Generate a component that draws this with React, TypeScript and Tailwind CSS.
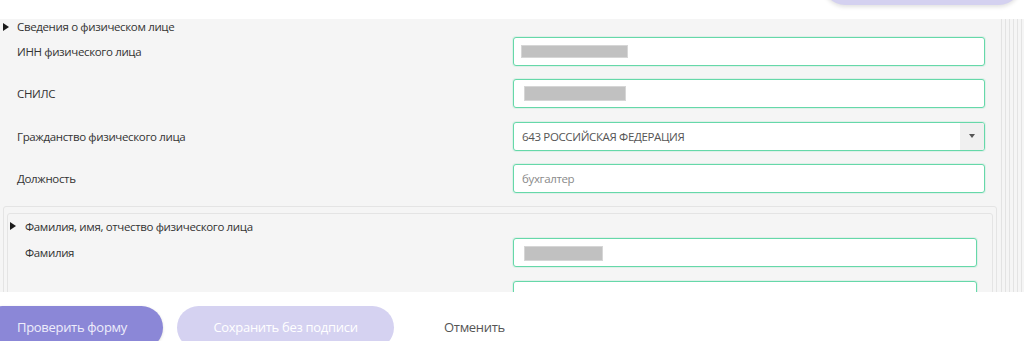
const font = { fontFamily: '"Open Sans", "Liberation Sans", sans-serif' }

function Caret() {
  return (
    <svg width="6" height="8" viewBox="0 0 6 8" className="shrink-0">
      <polygon points="0,0 6,4 0,8" fill="#1a1a1a" />
    </svg>
  )
}

function Masked({ w, h = 13 }: { w: number; h?: number }) {
  return (
    <div
      className="bg-[#c1c1c1] border border-[#d6d6d6]"
      style={{ width: w, height: h }}
    />
  )
}

type Row = {
  label: string
  content: React.ReactNode
  select?: boolean
}

function Field({ row, labelW }: { row: Row; labelW: number }) {
  return (
    <div className="flex items-center">
      <div
        className="text-[11.5px] tracking-[-0.35px] text-[#333] leading-none"
        style={{ width: labelW }}
      >
        {row.label}
      </div>
      <div className="flex-1 h-[29px] bg-white border border-[#66d8a9] rounded-[3px] shadow-[0_0_0_1px_rgba(102,216,169,0.15)] flex items-center overflow-hidden">
        <div className="flex-1 pl-[7px] flex items-center">{row.content}</div>
        {row.select && (
          <div className="w-[24px] h-full bg-[#f0f0f0] flex items-center justify-center">
            <svg width="6" height="4" viewBox="0 0 6 4">
              <polygon points="0,0 6,0 3,4" fill="#555" />
            </svg>
          </div>
        )}
      </div>
    </div>
  )
}

const personRows: Row[] = [
  { label: 'ИНН физического лица', content: <Masked w={107} /> },
  { label: 'СНИЛС', content: <div className="pl-[3px]"><Masked w={102} h={15} /></div> },
  {
    label: 'Гражданство физического лица',
    content: <span className="text-[11.5px] tracking-[-0.35px] text-[#555] pl-[1px]">643 РОССИЙСКАЯ ФЕДЕРАЦИЯ</span>,
    select: true,
  },
  {
    label: 'Должность',
    content: <span className="text-[11.5px] tracking-[-0.35px] text-[#8a8a8a] pl-[1px]">бухгалтер</span>,
  },
]

const nameRows: Row[] = [
  { label: 'Фамилия', content: <div className="pl-[3px] pt-[2px]"><Masked w={79} h={15} /></div> },
  { label: 'Имя', content: <span className="text-[12px] text-[#555]">&nbsp;</span> },
]

export default function App() {
  return (
    <div className="w-[1024px] h-[341px] bg-white overflow-hidden flex flex-col" style={font}>
      {/* top strip with the tail of a button scrolled out of view */}
      <div className="h-[19px] shrink-0 flex justify-end pr-[3px] overflow-hidden">
        <div className="w-[198px] h-[44px] -mt-[39px] rounded-full bg-[#d4d1f0] shadow-[0_2px_4px_rgba(0,0,0,0.12)]" />
      </div>

      {/* scrolling form area */}
      <div className="h-[273px] shrink-0 bg-[#f5f5f5] flex overflow-hidden">
        <div className="w-[1001px] shrink-0">
          <div className="h-[19px] flex items-center gap-[7px] pl-[3px] -mt-[2px]">
            <Caret />
            <span className="text-[11.5px] tracking-[-0.35px] text-[#333] pl-[1px]">Сведения о физическом лице</span>
          </div>
          <div className="flex flex-col gap-[13.4px] pl-[17px] pr-[16px] mt-[1px]">
            {personRows.map((r) => (
              <Field key={r.label} row={r} labelW={496} />
            ))}
          </div>

          <div className="mt-[13px] ml-[3px] mr-[4px] border border-[#e4e4e4] rounded-[3px] p-[6px] pl-[3px] pr-[3px]">
            <div className="border border-[#e4e4e4] rounded-[3px]">
              <div className="h-[24px] flex items-center gap-[8px] pl-[2px]">
                <Caret />
                <span className="text-[11.5px] tracking-[-0.35px] text-[#333] pl-[1px]">Фамилия, имя, отчество физического лица</span>
              </div>
              <div className="flex flex-col gap-[14px] pl-[17px] pr-[15px]">
                {nameRows.map((r) => (
                  <Field key={r.label} row={r} labelW={488} />
                ))}
              </div>
            </div>
          </div>
        </div>
        {/* edges of the outer nested panels */}
        <div className="flex gap-[3px]">
          {[0, 1, 2, 3, 4, 5].map((i) => (
            <div key={i} className="w-px h-full bg-[#e3e3e3]" />
          ))}
        </div>
      </div>

      {/* action bar */}
      <div className="flex-1 flex items-start pt-[14px]">
        <button className="-ml-[19px] w-[182px] h-[43px] rounded-full bg-[#8b87d7] text-[#eeedfb] text-[13px] tracking-[-0.3px] shadow-[0_1px_3px_rgba(0,0,0,0.15)]">
          Проверить форму
        </button>
        <button className="ml-[14px] w-[217px] h-[43px] rounded-full bg-[#d5d2f1] text-white text-[13px] tracking-[-0.3px]">
          Сохранить без подписи
        </button>
        <button className="ml-[50px] h-[43px] text-[#555] text-[13px] tracking-[-0.3px]">
          Отменить
        </button>
      </div>
    </div>
  )
}
